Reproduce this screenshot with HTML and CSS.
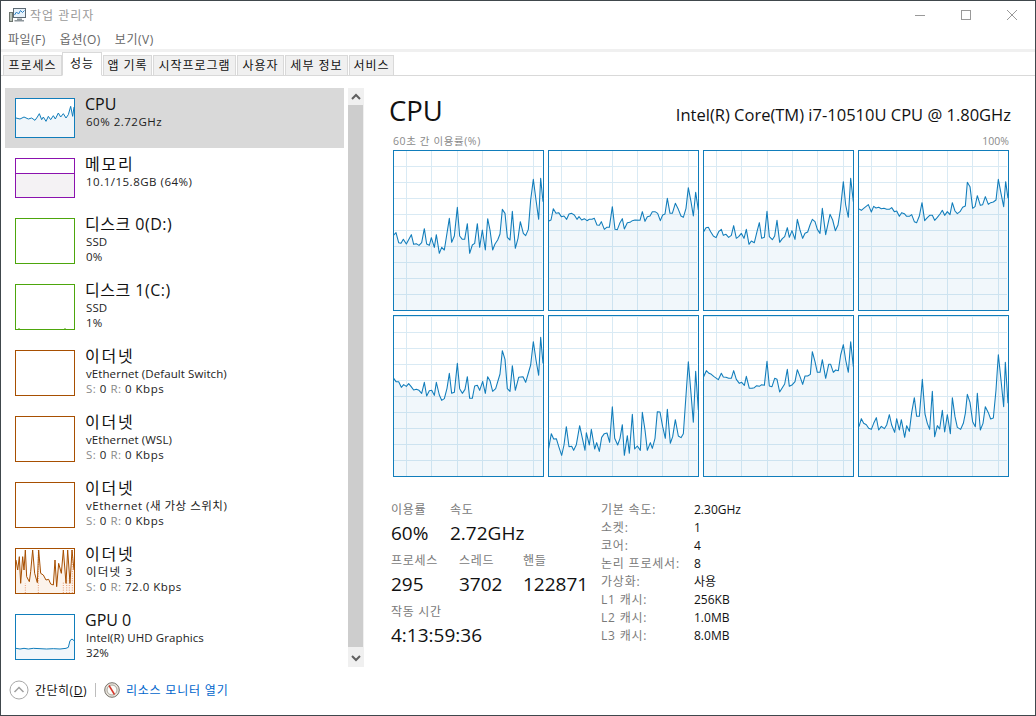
FILE: index.html
```html
<!DOCTYPE html>
<html lang="ko">
<head>
<meta charset="utf-8">
<title>작업 관리자</title>
<link rel="stylesheet" href="styles.css">
</head>
<body>
<div class="window">
  <header class="titlebar">
    <svg class="app-icon" width="17" height="16" viewBox="0 0 17 16">
      <rect x="0.5" y="5.5" width="3" height="9" fill="#b9c2b8" stroke="#6d756f"/>
      <rect x="4.5" y="1.5" width="12" height="9" fill="#e9f3fb" stroke="#5d6a74"/>
      <path d="M5.5 8l2-3 2 2 2-3.500 2 2 2-2" fill="none" stroke="#2a80c4"/>
      <path d="M8 11.500h5v1.500h2v1.500H5.500V13H8z" fill="#8d969b"/>
    </svg>
    <span class="title-text">작업 관리자</span>
    <div class="caption">
      <svg width="46" height="20" viewBox="0 0 46 20"><path d="M16 10.500h10" stroke="#999"/></svg>
      <svg width="46" height="20" viewBox="0 0 46 20"><rect x="17.500" y="5.500" width="9" height="9" fill="none" stroke="#999"/></svg>
      <svg width="46" height="20" viewBox="0 0 46 20"><path d="M18 5l10 10M28 5L18 15" stroke="#999" fill="none"/></svg>
    </div>
  </header>
  <nav class="menubar">
    <span class="menu-item">파일(F)</span>
    <span class="menu-item">옵션(O)</span>
    <span class="menu-item">보기(V)</span>
  </nav>
  <div class="tabs">
    <span class="tab t1">프로세스</span>
    <span class="tab active t2">성능</span>
    <span class="tab t3">앱 기록</span>
    <span class="tab t4">시작프로그램</span>
    <span class="tab t5">사용자</span>
    <span class="tab t6">세부 정보</span>
    <span class="tab t7">서비스</span>
  </div>
  <div class="content">
    <aside class="side">
      <div class="list">
        <div class="row selected">
          <div class="thumb blue">
            <svg viewBox="48 298 174 114" preserveAspectRatio="none">
              <polygon class="fill-blue" points="48,355 60,358 72,352 85,358 95,355 105,362 112,352 118,342 125,360 130,352 138,365 145,350 152,360 160,348 166,358 175,340 182,352 190,342 198,355 205,345 212,320 218,350 222,322 222,412 48,412"/>
              <polyline class="line-blue" points="48,355 60,358 72,352 85,358 95,355 105,362 112,352 118,342 125,360 130,352 138,365 145,350 152,360 160,348 166,358 175,340 182,352 190,342 198,355 205,345 212,320 218,350 222,322"/>
            </svg>
          </div>
          <div class="info"><div class="name">CPU</div><div class="sub num">60% 2.72GHz</div></div>
        </div>
        <div class="row">
          <div class="thumb purple mem"><div class="mem-free"></div><div class="mem-used"></div></div>
          <div class="info"><div class="name ko">메모리</div><div class="sub num">10.1/15.8GB (64%)</div></div>
        </div>
        <div class="row tall">
          <div class="thumb big green"></div>
          <div class="info"><div class="name disk">디스크 0(D:)</div><div class="sub">SSD</div><div class="sub">0%</div></div>
        </div>
        <div class="row tall">
          <div class="thumb big green">
            <svg viewBox="0 0 58 44"><path d="M3 44v-1M49 44v-1" stroke="#4da60c"/></svg>
          </div>
          <div class="info"><div class="name disk">디스크 1(C:)</div><div class="sub">SSD</div><div class="sub">1%</div></div>
        </div>
        <div class="row tall">
          <div class="thumb big orange"></div>
          <div class="info"><div class="name ko">이더넷</div><div class="sub">vEthernet (Default Switch)</div><div class="sub num"><span class="dim">S:</span> 0 <span class="dim">R:</span> 0 Kbps</div></div>
        </div>
        <div class="row tall">
          <div class="thumb big orange"></div>
          <div class="info"><div class="name ko">이더넷</div><div class="sub">vEthernet (WSL)</div><div class="sub num"><span class="dim">S:</span> 0 <span class="dim">R:</span> 0 Kbps</div></div>
        </div>
        <div class="row tall">
          <div class="thumb big orange"></div>
          <div class="info"><div class="name ko">이더넷</div><div class="sub num">vEthernet (새 가상 스위치)</div><div class="sub num"><span class="dim">S:</span> 0 <span class="dim">R:</span> 0 Kbps</div></div>
        </div>
        <div class="row tall">
          <div class="thumb big orange">
            <svg viewBox="48 27 174 132" preserveAspectRatio="none">
              <polygon class="fill-orange" points="48,60 53,90 58,50 62,130 68,50 72,90 76,30 80,110 88,125 92,95 98,30 104,100 112,128 116,30 122,100 130,105 138,120 146,118 152,132 160,135 165,60 170,140 176,70 184,100 190,30 198,130 203,30 210,130 216,30 222,90 222,159 48,159"/>
              <path class="dots" d="M76 159V130M115 159V30M190 159V125M200 159V120M208 159V115M217 159V30"/>
              <polyline class="line-orange" points="48,60 53,90 58,50 62,130 68,50 72,90 76,30 80,110 88,125 92,95 98,30 104,100 112,128 116,30 122,100 130,105 138,120 146,118 152,132 160,135 165,60 170,140 176,70 184,100 190,30 198,130 203,30 210,130 216,30 222,90"/>
            </svg>
          </div>
          <div class="info"><div class="name ko">이더넷</div><div class="sub kos">이더넷 3</div><div class="sub num"><span class="dim">S:</span> 0 <span class="dim">R:</span> 72.0 Kbps</div></div>
        </div>
        <div class="row tall">
          <div class="thumb big blue">
            <svg viewBox="48 225 174 132" preserveAspectRatio="none">
              <polygon class="fill-blue" points="48,325 60,327 72,325 85,327 100,325 120,326 140,327 160,326 180,327 198,325 205,322 210,302 216,297 222,302 222,357 48,357"/>
              <polyline class="line-blue" points="48,325 60,327 72,325 85,327 100,325 120,326 140,327 160,326 180,327 198,325 205,322 210,302 216,297 222,302"/>
            </svg>
          </div>
          <div class="info"><div class="name">GPU 0</div><div class="sub">Intel(R) UHD Graphics</div><div class="sub">32%</div></div>
        </div>
      </div>
      <div class="scrollbar">
        <div class="arrow">
          <svg width="16" height="17" viewBox="0 0 16 17"><path d="M4 11l4-4 4 4" fill="none" stroke="#606060" stroke-width="2"/></svg>
        </div>
        <div class="track"><div class="scroll-thumb"></div></div>
        <div class="arrow">
          <svg width="16" height="17" viewBox="0 0 16 17"><path d="M4 6l4 4 4-4" fill="none" stroke="#606060" stroke-width="2"/></svg>
        </div>
      </div>
    </aside>
    <main class="main">
      <div class="head">
        <h1 class="cpu-title">CPU</h1>
        <div class="cpu-model">Intel(R) Core(TM) i7-10510U CPU @ 1.80GHz</div>
      </div>
      <div class="axis"><span class="axis-label">60초 간 이용률(%)</span><span>100%</span></div>
      <div class="charts">
        <div class="chart">
          <svg viewBox="27 63 447 477" preserveAspectRatio="none">
            <polygon class="area" points="26,315 33,308 41,338 48,340 55,328 64,342 79,314 86,343 94,341 102,346 110,338 118,296 125,342 133,346 139,323 148,352 154,314 163,370 170,352 178,360 193,265 200,337 208,318 217,232 224,318 232,328 239,328 247,281 254,370 262,345 269,340 277,281 284,352 292,300 301,360 308,266 315,300 323,360 330,342 338,330 345,312 352,238 360,250 367,322 375,330 382,244 391,355 399,325 406,275 415,310 422,317 430,298 437,210 445,148 453,210 461,268 467,145 474,215 474,540 26,540"/>
            <polyline class="trace" points="26,315 33,308 41,338 48,340 55,328 64,342 79,314 86,343 94,341 102,346 110,338 118,296 125,342 133,346 139,323 148,352 154,314 163,370 170,352 178,360 193,265 200,337 208,318 217,232 224,318 232,328 239,328 247,281 254,370 262,345 269,340 277,281 284,352 292,300 301,360 308,266 315,300 323,360 330,342 338,330 345,312 352,238 360,250 367,322 375,330 382,244 391,355 399,325 406,275 415,310 422,317 430,298 437,210 445,148 453,210 461,268 467,145 474,215"/>
          </svg>
        </div>
        <div class="chart">
          <svg viewBox="492 63 447 477" preserveAspectRatio="none">
            <polygon class="area" points="491,273 498,270 505,236 513,250 521,248 529,260 537,258 545,268 552,252 560,250 568,255 576,268 582,260 590,270 598,266 606,272 613,268 621,268 628,265 636,285 643,286 649,275 658,298 665,292 673,292 682,230 690,298 697,299 705,278 712,266 718,297 727,278 735,277 742,272 750,270 765,271 772,245 780,274 787,260 795,258 802,245 810,245 818,250 826,272 833,255 840,252 847,205 855,250 862,250 871,220 880,238 888,258 895,262 903,235 910,173 918,215 925,258 932,187 940,240 940,540 491,540"/>
            <polyline class="trace" points="491,273 498,270 505,236 513,250 521,248 529,260 537,258 545,268 552,252 560,250 568,255 576,268 582,260 590,270 598,266 606,272 613,268 621,268 628,265 636,285 643,286 649,275 658,298 665,292 673,292 682,230 690,298 697,299 705,278 712,266 718,297 727,278 735,277 742,272 750,270 765,271 772,245 780,274 787,260 795,258 802,245 810,245 818,250 826,272 833,255 840,252 847,205 855,250 862,250 871,220 880,238 888,258 895,262 903,235 910,173 918,215 925,258 932,187 940,240"/>
          </svg>
        </div>
        <div class="chart">
          <svg viewBox="12 63 447 477" preserveAspectRatio="none">
            <polygon class="area" points="11,305 18,293 25,292 32,305 40,318 48,323 56,305 64,298 70,316 78,313 86,322 94,316 101,287 109,325 116,320 124,310 132,325 139,298 147,343 154,333 163,338 171,305 178,278 185,325 193,322 201,244 208,320 217,329 224,318 231,271 239,337 247,326 254,320 262,293 268,322 276,302 285,328 292,268 300,300 308,325 315,310 323,306 330,285 337,268 345,275 352,298 360,310 367,235 377,314 390,253 398,270 406,302 414,285 421,240 430,155 437,225 445,262 452,145 460,215 460,540 11,540"/>
            <polyline class="trace" points="11,305 18,293 25,292 32,305 40,318 48,323 56,305 64,298 70,316 78,313 86,322 94,316 101,287 109,325 116,320 124,310 132,325 139,298 147,343 154,333 163,338 171,305 178,278 185,325 193,322 201,244 208,320 217,329 224,318 231,271 239,337 247,326 254,320 262,293 268,322 276,302 285,328 292,268 300,300 308,325 315,310 323,306 330,285 337,268 345,275 352,298 360,310 367,235 377,314 390,253 398,270 406,302 414,285 421,240 430,155 437,225 445,262 452,145 460,215"/>
          </svg>
        </div>
        <div class="chart">
          <svg viewBox="477 63 447 477" preserveAspectRatio="none">
            <polygon class="area" points="477,237 484,241 491,235 505,224 514,246 521,229 528,234 536,232 544,236 552,235 560,238 568,238 575,233 583,245 590,243 598,259 605,248 613,251 620,259 628,259 635,254 643,275 650,278 658,258 666,218 674,272 682,263 689,256 697,256 704,271 712,262 720,252 727,241 734,256 742,245 750,254 757,218 765,243 772,251 780,245 788,232 796,228 802,157 810,170 818,235 825,230 832,197 841,226 848,224 856,200 865,223 872,218 880,216 888,210 895,148 903,190 911,230 917,155 924,205 924,540 477,540"/>
            <polyline class="trace" points="477,237 484,241 491,235 505,224 514,246 521,229 528,234 536,232 544,236 552,235 560,238 568,238 575,233 583,245 590,243 598,259 605,248 613,251 620,259 628,259 635,254 643,275 650,278 658,258 666,218 674,272 682,263 689,256 697,256 704,271 712,262 720,252 727,241 734,256 742,245 750,254 757,218 765,243 772,251 780,245 788,232 796,228 802,157 810,170 818,235 825,230 832,197 841,226 848,224 856,200 865,223 872,218 880,216 888,210 895,148 903,190 911,230 917,155 924,205"/>
          </svg>
        </div>
        <div class="chart low">
          <svg viewBox="27 18 447 480" preserveAspectRatio="none">
            <polygon class="area" points="26,205 33,215 41,215 49,232 56,224 64,229 71,221 78,229 86,240 94,238 102,241 110,250 118,217 125,258 133,242 140,241 148,256 154,217 163,255 170,271 178,266 186,235 193,190 200,250 208,247 217,160 224,236 232,250 240,238 247,200 254,265 262,265 269,228 277,226 284,241 293,214 301,250 308,200 315,212 323,244 332,236 345,192 352,122 360,148 367,236 375,244 382,167 391,241 401,202 414,200 422,217 437,165 445,95 453,150 461,196 467,82 474,160 474,498 26,498"/>
            <polyline class="trace" points="26,205 33,215 41,215 49,232 56,224 64,229 71,221 78,229 86,240 94,238 102,241 110,250 118,217 125,258 133,242 140,241 148,256 154,217 163,255 170,271 178,266 186,235 193,190 200,250 208,247 217,160 224,236 232,250 240,238 247,200 254,265 262,265 269,228 277,226 284,241 293,214 301,250 308,200 315,212 323,244 332,236 345,192 352,122 360,148 367,236 375,244 382,167 391,241 401,202 414,200 422,217 437,165 445,95 453,150 461,196 467,82 474,160"/>
          </svg>
        </div>
        <div class="chart low">
          <svg viewBox="492 18 447 480" preserveAspectRatio="none">
            <polygon class="area" points="491,415 499,371 506,387 514,386 522,412 530,436 537,405 544,350 552,410 560,409 566,421 574,404 584,347 591,380 600,421 604,368 613,405 619,358 629,417 635,398 643,424 650,382 658,371 666,369 674,397 682,290 689,385 698,405 705,385 712,344 718,436 727,377 733,430 742,313 749,417 757,408 766,421 772,307 780,360 787,421 796,398 802,415 810,385 817,305 825,306 833,350 841,385 847,298 856,400 863,380 871,329 880,378 888,383 895,371 910,155 918,250 925,337 932,184 940,300 940,498 491,498"/>
            <polyline class="trace" points="491,415 499,371 506,387 514,386 522,412 530,436 537,405 544,350 552,410 560,409 566,421 574,404 584,347 591,380 600,421 604,368 613,405 619,358 629,417 635,398 643,424 650,382 658,371 666,369 674,397 682,290 689,385 698,405 705,385 712,344 718,436 727,377 733,430 742,313 749,417 757,408 766,421 772,307 780,360 787,421 796,398 802,415 810,385 817,305 825,306 833,350 841,385 847,298 856,400 863,380 871,329 880,378 888,383 895,371 910,155 918,250 925,337 932,184 940,300"/>
          </svg>
        </div>
        <div class="chart low">
          <svg viewBox="12 18 447 480" preserveAspectRatio="none">
            <polygon class="area" points="11,200 19,182 27,190 34,193 42,200 55,209 64,190 70,201 78,202 86,205 94,205 101,182 109,208 118,220 125,217 133,226 139,199 148,235 156,235 163,233 170,227 178,229 185,224 193,226 201,154 208,228 216,230 224,205 231,208 239,246 246,235 254,222 262,178 268,229 277,224 285,215 292,179 300,200 308,223 315,198 323,198 331,193 337,125 345,155 352,187 360,187 367,149 377,205 386,163 392,163 400,187 407,180 415,182 422,135 430,104 437,150 445,187 452,95 460,170 460,498 11,498"/>
            <polyline class="trace" points="11,200 19,182 27,190 34,193 42,200 55,209 64,190 70,201 78,202 86,205 94,205 101,182 109,208 118,220 125,217 133,226 139,199 148,235 156,235 163,233 170,227 178,229 185,224 193,226 201,154 208,228 216,230 224,205 231,208 239,246 246,235 254,222 262,178 268,229 277,224 285,215 292,179 300,200 308,223 315,198 323,198 331,193 337,125 345,155 352,187 360,187 367,149 377,205 386,163 392,163 400,187 407,180 415,182 422,135 430,104 437,150 445,187 452,95 460,170"/>
          </svg>
        </div>
        <div class="chart low">
          <svg viewBox="477 18 447 480" preserveAspectRatio="none">
            <polygon class="area" points="477,350 484,326 491,340 499,344 506,355 514,358 521,340 529,323 536,360 544,349 553,356 560,345 568,314 575,345 584,367 590,326 598,360 604,329 614,382 620,347 628,364 635,308 643,263 650,319 658,319 667,208 675,312 682,340 689,358 697,244 704,380 712,347 719,357 727,301 734,366 742,314 751,371 757,263 765,320 772,352 782,358 790,340 796,310 802,253 810,277 818,335 826,350 832,250 841,360 849,340 856,290 865,308 872,327 880,324 888,240 895,134 903,210 911,290 916,157 924,280 924,498 477,498"/>
            <polyline class="trace" points="477,350 484,326 491,340 499,344 506,355 514,358 521,340 529,323 536,360 544,349 553,356 560,345 568,314 575,345 584,367 590,326 598,360 604,329 614,382 620,347 628,364 635,308 643,263 650,319 658,319 667,208 675,312 682,340 689,358 697,244 704,380 712,347 719,357 727,301 734,366 742,314 751,371 757,263 765,320 772,352 782,358 790,340 796,310 802,253 810,277 818,335 826,350 832,250 841,360 849,340 856,290 865,308 872,327 880,324 888,240 895,134 903,210 911,290 916,157 924,280"/>
          </svg>
        </div>
      </div>
      <div class="stats">
        <div class="live">
          <div class="stat-row">
            <div class="stat w59"><div class="stat-label">이용률</div><div class="stat-value">60%</div></div>
            <div class="stat"><div class="stat-label">속도</div><div class="stat-value">2.72GHz</div></div>
          </div>
          <div class="stat-row">
            <div class="stat w68"><div class="stat-label">프로세스</div><div class="stat-value">295</div></div>
            <div class="stat w64"><div class="stat-label">스레드</div><div class="stat-value">3702</div></div>
            <div class="stat"><div class="stat-label">핸들</div><div class="stat-value">122871</div></div>
          </div>
          <div class="stat-row">
            <div class="stat"><div class="stat-label">작동 시간</div><div class="stat-value">4:13:59:36</div></div>
          </div>
        </div>
        <dl class="spec">
          <dt>기본 속도:</dt><dd>2.30GHz</dd>
          <dt>소켓:</dt><dd>1</dd>
          <dt>코어:</dt><dd>4</dd>
          <dt>논리 프로세서:</dt><dd>8</dd>
          <dt>가상화:</dt><dd>사용</dd>
          <dt>L1 캐시:</dt><dd>256KB</dd>
          <dt>L2 캐시:</dt><dd>1.0MB</dd>
          <dt>L3 캐시:</dt><dd>8.0MB</dd>
        </dl>
      </div>
    </main>
  </div>
  <footer class="footer">
    <svg width="20" height="20" viewBox="0 0 20 20"><circle cx="10" cy="10" r="9" fill="#fff" stroke="#a8a8a8"/><path d="M5.500 12l4.500-4.500 4.500 4.500" fill="none" stroke="#a0a0a0" stroke-width="1.500"/></svg>
    <span class="less">간단히(<u>D</u>)</span>
    <span class="divider"></span>
    <svg width="16" height="16" viewBox="0 0 16 16"><circle cx="8" cy="8" r="7.300" fill="#e8e4dc" stroke="#77736c"/><circle cx="8" cy="8" r="5" fill="#fbfbf8" stroke="#a9a59c"/><path d="M5 3.500l5.500 9" stroke="#d6362a" stroke-width="1.500"/></svg>
    <span class="monitor">리소스 모니터 열기</span>
  </footer>
</div>
</body>
</html>
```
FILE: styles.css
```css
* { box-sizing: border-box; }
html, body { margin: 0; height: 100%; }
body {
  background: #fff;
  color: #111;
  font-family: "Open Sans", "Noto Sans CJK KR", "Noto Sans", sans-serif;
  font-size: 12px;
}
.window {
  width: 1036px;
  height: 716px;
  border: 1px solid #40474c;
  display: flex;
  flex-direction: column;
  overflow: hidden;
  background: #fff;
}
.titlebar { height: 29px; display: flex; align-items: center; padding: 0 0 2px 8px; flex: none; }
.app-icon { flex: none; margin-right: 4px; }
.title-text { font-size: 12px; color: #9a9a9a; letter-spacing: 1px; }
.caption { margin-left: auto; display: flex; margin-right: 1px; }
.caption svg { display: block; margin-right: -1px; }
.menubar {
  height: 22px;
  display: flex;
  align-items: flex-start;
  padding: 1px 0 0 7px;
  gap: 14px;
  border-bottom: 3px solid #f0f0f0;
  flex: none;
}
.menu-item { font-size: 12px; line-height: 18px; color: #666; letter-spacing: .5px; }
.tabs {
  height: 24px;
  display: flex;
  align-items: flex-end;
  padding-left: 2px;
  border-bottom: 1px solid #d9d9d9;
  flex: none;
}
.tab {
  height: 21px;
  margin-bottom: -1px;
  margin-right: 1px;
  background: #f0f0f0;
  border: 1px solid #d9d9d9;
  font-size: 12px;
  line-height: 19px;
  text-align: center;
  color: #111;
  letter-spacing: 1px;
}
.tab.active { height: 24px; background: #fff; border-bottom-color: #fff; line-height: 21px; margin-left: -1px; }
.t1 { width: 59px; }
.t2 { width: 40px; }
.t3 { width: 49px; }
.t4 { width: 83px; }
.t5 { width: 47px; }
.t6 { width: 63px; }
.t7 { width: 45px; }

.content { flex: 1; display: flex; min-height: 0; padding-top: 12px; }
.side { width: 363px; display: flex; flex: none; height: 579px; padding-left: 4px; }
.list { width: 339px; flex: none; }
.row { height: 60px; display: flex; padding-left: 10px; }
.row.tall { height: 66px; }
.row.selected { background: #d9d9d9; }
.thumb { width: 60px; height: 40px; margin-top: 10px; border: 1px solid; flex: none; background: #fff; overflow: hidden; }
.thumb.big { height: 46px; }
.thumb svg { display: block; width: 100%; height: 100%; }
.blue { border-color: #117dbb; }
.purple { border-color: #8b12ae; }
.green { border-color: #4da60c; }
.orange { border-color: #a74f01; }
.mem { display: flex; flex-direction: column; }
.mem-free { height: 14px; }
.mem-used { flex: 1; background: #f4f2f4; border-top: 1px solid #8b12ae; }
.fill-blue { fill: #f1f6fa; }
.line-blue { fill: none; stroke: #117dbb; stroke-width: 3; }
.fill-orange { fill: #fcf3eb; }
.line-orange { fill: none; stroke: #a74f01; stroke-width: 3; }
.dots { fill: none; stroke: #e0703a; stroke-width: 2; stroke-dasharray: 3 4; }
.info { margin-left: 10px; padding-top: 6px; white-space: nowrap; }
.name { font-size: 16px; line-height: 20px; color: #111; margin-bottom: -1px; }
.name.ko { letter-spacing: 1.800px; }
.name.disk { letter-spacing: .5px; }
.sub { font-size: 11.500px; line-height: 15px; color: #222; padding-left: 1px; padding-top: 1px; margin-bottom: -1px; letter-spacing: .08px; }
.sub.num { letter-spacing: .5px; }
.sub.kos { letter-spacing: 1.200px; }
.dim { color: #8a8a8a; }

.scrollbar { width: 16px; margin-left: 4px; display: flex; flex-direction: column; flex: none; background: #f0f0f0; }
.arrow { height: 17px; flex: none; }
.arrow svg { display: block; }
.track { flex: 1; padding: 0 1px 3px 0; }
.scroll-thumb { height: 100%; background: #cdcdcd; }

.main { flex: 1; padding-left: 25px; min-width: 0; }
.head { display: flex; align-items: baseline; justify-content: space-between; height: 46px; padding-top: 6px; width: 622px; }
.cpu-title { margin: 0; font-size: 27.500px; line-height: 34px; font-weight: 400; color: #111; }
.cpu-model { font-size: 16.500px; line-height: 22px; color: #111; }
.axis { display: flex; justify-content: space-between; width: 620px; padding-left: 4px; font-size: 10.500px; line-height: 14px; height: 16px; color: #8a8a8a; }
.axis-label { letter-spacing: .6px; }
.charts {
  margin-left: 4px;
  display: grid;
  grid-template-columns: repeat(4, 151px);
  grid-template-rows: 161px 162px;
  gap: 4px;
}
.chart {
  --g: #d9eaf4;
  border: 1px solid #117dbb;
  background-color: #fff;
  background-image:
    linear-gradient(var(--g), var(--g)), linear-gradient(var(--g), var(--g)), linear-gradient(var(--g), var(--g)),
    linear-gradient(var(--g), var(--g)), linear-gradient(var(--g), var(--g)), linear-gradient(var(--g), var(--g)),
    linear-gradient(to bottom, var(--g) 1px, transparent 1px);
  background-size: 1px 100%, 1px 100%, 1px 100%, 1px 100%, 1px 100%, 1px 100%, calc(100% - 1px) 16px;
  background-position: 12px 0, 37px 0, 63px 0, 88px 0, 113px 0, 139px 0, 0 15px;
  background-repeat: no-repeat, no-repeat, no-repeat, no-repeat, no-repeat, no-repeat, repeat-y;
}
.chart.low { background-position: 12px 0, 37px 0, 63px 0, 88px 0, 113px 0, 139px 0, 0 0; }
.chart svg { display: block; width: 100%; height: 100%; }
.area { fill: rgba(17, 125, 187, 0.06); }
.trace { fill: none; stroke: #117dbb; stroke-width: 3.200; stroke-linejoin: round; }

.stats { display: flex; margin-top: 24px; padding-left: 2px; }
.live { width: 210px; flex: none; }
.stat-row { display: flex; height: 51px; }
.w59 { width: 59px; }
.w68 { width: 68px; }
.w64 { width: 64px; }
.stat-label { font-size: 12px; line-height: 18px; color: #7a7a7a; letter-spacing: .7px; }
.stat-value { font-size: 19px; line-height: 28px; color: #111; white-space: nowrap; }
.spec { margin: 0; display: grid; grid-template-columns: 93px auto; grid-auto-rows: 18px; }
.spec dt { font-size: 12px; line-height: 18px; color: #7a7a7a; white-space: nowrap; letter-spacing: .8px; }
.spec dd { margin: 0; font-size: 12px; line-height: 18px; color: #111; }

.footer { height: 47px; display: flex; align-items: center; padding: 0 0 3px 8px; flex: none; }
.less { margin-left: 6px; font-size: 12px; color: #111; letter-spacing: .5px; }
.divider { width: 1px; height: 14px; background: #bdbdbd; margin: 0 8px 0 8px; }
.monitor { margin-left: 6px; font-size: 12px; color: #0066cc; letter-spacing: .8px; }
```
